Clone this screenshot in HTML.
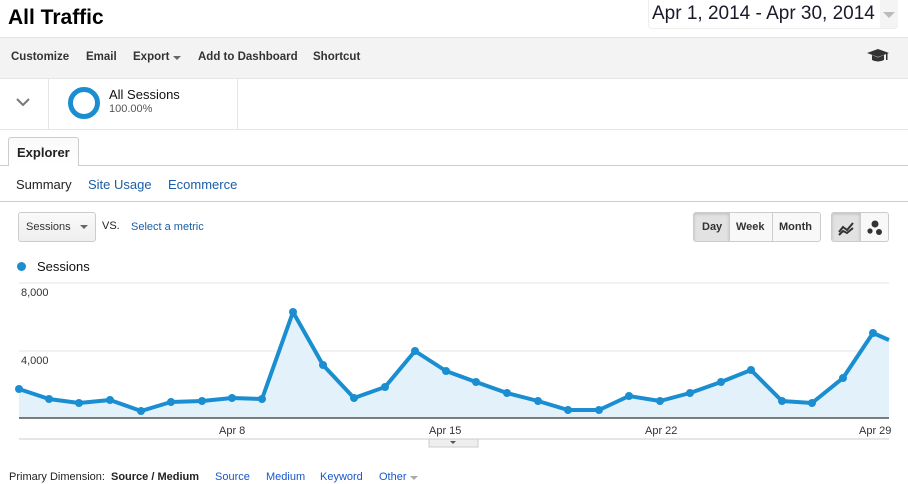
<!DOCTYPE html>
<html><head><meta charset="utf-8"><style>
*{margin:0;padding:0;box-sizing:border-box}
body{width:908px;height:484px;overflow:hidden;background:#fff;font-family:"Liberation Sans",Arial,sans-serif;position:relative;color:#222}
.a{position:absolute;white-space:nowrap}
.link{color:#1a5ea8}
</style></head><body>
<div class="a" style="left:8px;top:6px;font-size:21px;font-weight:bold;color:#000">All Traffic</div>
<div class="a" style="left:648px;top:0;width:250px;height:29px;border:1px solid #eee;border-top:none;border-radius:0 0 4px 4px"></div>
<div class="a" style="left:652px;top:3px;font-size:19px;color:#1a1a2a">Apr 1, 2014 - Apr 30, 2014</div>
<div class="a" style="left:880px;top:0;width:18px;height:28px;background:#f4f4f4"></div>
<div class="a" style="left:883px;top:12px;border-left:6px solid transparent;border-right:6px solid transparent;border-top:6px solid #bbb"></div>

<div class="a" style="left:0;top:37px;width:908px;height:42px;background:#f3f3f3;border-top:1px solid #e2e2e2;border-bottom:1px solid #e6e6e6"></div>
<div class="a" style="left:11px;top:51px;font-size:11.5px;font-weight:bold;color:#333;word-spacing:0">Customize</div>
<div class="a" style="left:86px;top:51px;font-size:11.5px;font-weight:bold;color:#333">Email</div>
<div class="a" style="left:133px;top:51px;font-size:11.5px;font-weight:bold;color:#333">Export</div>
<div class="a" style="left:173px;top:56px;border-left:4px solid transparent;border-right:4px solid transparent;border-top:4px solid #666"></div>
<div class="a" style="left:198px;top:51px;font-size:11.5px;font-weight:bold;color:#333">Add to Dashboard</div>
<div class="a" style="left:313px;top:51px;font-size:11.5px;font-weight:bold;color:#333">Shortcut</div>
<svg class="a" style="left:866px;top:48px" width="24" height="16" viewBox="0 0 24 16"><path d="M1 5 L12 1 L23 5 L12 9 Z" fill="#333"/><path d="M6 7 L6 12 Q12 15 18 12 L18 7 L12 9.5 Z" fill="#333"/><rect x="20" y="5" width="1.5" height="7" fill="#333"/></svg>

<div class="a" style="left:48px;top:79px;width:1px;height:50px;background:#e6e6e6"></div>
<div class="a" style="left:237px;top:79px;width:1px;height:50px;background:#e6e6e6"></div>
<div class="a" style="left:0;top:129px;width:908px;height:1px;background:#e6e6e6"></div>
<svg class="a" style="left:16px;top:98px" width="14" height="9"><path d="M1 1 L7 7 L13 1" stroke="#777" stroke-width="2" fill="none"/></svg>
<div class="a" style="left:68px;top:87px;width:32px;height:32px;border:5px solid #1a8ed1;border-radius:50%"></div>
<div class="a" style="left:109px;top:87px;font-size:13px;color:#111">All Sessions</div>
<div class="a" style="left:109px;top:103px;font-size:11px;color:#555">100.00%</div>

<div class="a" style="left:0;top:165px;width:908px;height:1px;background:#ccc"></div>
<div class="a" style="left:8px;top:137px;width:71px;height:29px;border:1px solid #ccc;border-bottom:none;background:linear-gradient(#fafafa,#fff);border-radius:3px 3px 0 0"></div>
<div class="a" style="left:17px;top:145px;font-size:13px;font-weight:bold;color:#222">Explorer</div>
<div class="a" style="left:16px;top:177px;font-size:13px;color:#222">Summary</div>
<div class="a link" style="left:88px;top:177px;font-size:13px">Site Usage</div>
<div class="a link" style="left:168px;top:177px;font-size:13px">Ecommerce</div>
<div class="a" style="left:0;top:201px;width:908px;height:1px;background:#ccc"></div>

<div class="a" style="left:18px;top:212px;width:78px;height:30px;border:1px solid #ccc;border-radius:3px;background:linear-gradient(#fafafa,#eee)"></div>
<div class="a" style="left:26px;top:221px;font-size:11px;color:#333">Sessions</div>
<div class="a" style="left:80px;top:225px;border-left:4px solid transparent;border-right:4px solid transparent;border-top:4px solid #666"></div>
<div class="a" style="left:102px;top:220px;font-size:11px;color:#222">VS.</div>
<div class="a link" style="left:131px;top:221px;font-size:11px">Select a metric</div>

<div class="a" style="left:693px;top:212px;width:128px;height:30px;border:1px solid #ccc;border-radius:3px;background:#f8f8f8;overflow:hidden">
<div style="position:absolute;left:0;top:0;width:35px;height:30px;background:#e2e2e2;box-shadow:inset 0 1px 3px #bbb"></div>
<div style="position:absolute;left:35px;top:0;width:1px;height:30px;background:#ccc"></div>
<div style="position:absolute;left:78px;top:0;width:1px;height:30px;background:#ccc"></div>
<div style="position:absolute;left:8px;top:8px;font-size:11px;font-weight:bold;color:#333">Day</div>
<div style="position:absolute;left:42px;top:8px;font-size:11px;font-weight:bold;color:#333">Week</div>
<div style="position:absolute;left:85px;top:8px;font-size:11px;font-weight:bold;color:#333">Month</div>
</div>
<div class="a" style="left:831px;top:212px;width:58px;height:30px;border:1px solid #ccc;border-radius:3px;background:#f8f8f8;overflow:hidden">
<div style="position:absolute;left:0;top:0;width:28px;height:30px;background:#e2e2e2;box-shadow:inset 0 1px 3px #bbb"></div>
<div style="position:absolute;left:28px;top:0;width:1px;height:30px;background:#ccc"></div>
<svg style="position:absolute;left:6px;top:7px" width="16" height="16"><path d="M1 12 L5 7 L9 10 L15 3" stroke="#333" stroke-width="2" fill="none"/><path d="M1 15 L5 11 L9 13 L15 8" stroke="#333" stroke-width="2" fill="none"/></svg>
<svg style="position:absolute;left:32px;top:6px" width="22" height="18"><circle cx="11" cy="5" r="3.5" fill="#333"/><circle cx="6" cy="12" r="2.6" fill="#333"/><circle cx="15" cy="13" r="3" fill="#333"/></svg>
</div>

<div class="a" style="left:17px;top:262px;width:9px;height:9px;border-radius:50%;background:#1a8ed1"></div>
<div class="a" style="left:37px;top:259px;font-size:13px;color:#111">Sessions</div>

<svg class="a" style="left:0;top:280px" width="908" height="170">
<line x1="19" y1="3" x2="889" y2="3" stroke="#e6e6e6"/>
<line x1="19" y1="71" x2="889" y2="71" stroke="#e6e6e6"/>
<text x="21" y="16" font-size="11" fill="#333" font-family="Liberation Sans">8,000</text>
<text x="21" y="84" font-size="11" fill="#333" font-family="Liberation Sans">4,000</text>
<path d="M19 109 L49 119 L79 123 L110 120 L141 131 L171 122 L202 121 L232 118 L262 119 L293 32 L323 85 L354 118 L385 107 L415 71 L446 91 L476 102 L507 113 L538 121 L568 130 L599 130 L629 116 L660 121 L690 113 L721 102 L751 90 L782 121 L812 123 L843 98 L873 53 L889 60 L889 138 L19 138 Z" fill="#e3f1fa"/>
<path d="M19 109 L49 119 L79 123 L110 120 L141 131 L171 122 L202 121 L232 118 L262 119 L293 32 L323 85 L354 118 L385 107 L415 71 L446 91 L476 102 L507 113 L538 121 L568 130 L599 130 L629 116 L660 121 L690 113 L721 102 L751 90 L782 121 L812 123 L843 98 L873 53 L889 60" stroke="#1a8ed1" stroke-width="4" fill="none" stroke-linejoin="round"/>
<g fill="#1a8ed1">
<circle cx="19" cy="109" r="4"/><circle cx="49" cy="119" r="4"/><circle cx="79" cy="123" r="4"/><circle cx="110" cy="120" r="4"/><circle cx="141" cy="131" r="4"/><circle cx="171" cy="122" r="4"/><circle cx="202" cy="121" r="4"/><circle cx="232" cy="118" r="4"/><circle cx="262" cy="119" r="4"/><circle cx="293" cy="32" r="4"/><circle cx="323" cy="85" r="4"/><circle cx="354" cy="118" r="4"/><circle cx="385" cy="107" r="4"/><circle cx="415" cy="71" r="4"/><circle cx="446" cy="91" r="4"/><circle cx="476" cy="102" r="4"/><circle cx="507" cy="113" r="4"/><circle cx="538" cy="121" r="4"/><circle cx="568" cy="130" r="4"/><circle cx="599" cy="130" r="4"/><circle cx="629" cy="116" r="4"/><circle cx="660" cy="121" r="4"/><circle cx="690" cy="113" r="4"/><circle cx="721" cy="102" r="4"/><circle cx="751" cy="90" r="4"/><circle cx="782" cy="121" r="4"/><circle cx="812" cy="123" r="4"/><circle cx="843" cy="98" r="4"/><circle cx="873" cy="53" r="4"/>
</g>
<line x1="19" y1="138" x2="889" y2="138" stroke="#333" stroke-width="1.2"/>
<text x="219" y="154" font-size="11" fill="#333" font-family="Liberation Sans">Apr 8</text>
<text x="429" y="154" font-size="11" fill="#333" font-family="Liberation Sans">Apr 15</text>
<text x="645" y="154" font-size="11" fill="#333" font-family="Liberation Sans">Apr 22</text>
<text x="859" y="154" font-size="11" fill="#333" font-family="Liberation Sans">Apr 29</text>
<line x1="19" y1="159" x2="889" y2="159" stroke="#ccc"/>
<rect x="429" y="159" width="49" height="8" fill="#eee" stroke="#ccc"/>
<path d="M450 161 L456 161 L453 164 Z" fill="#555"/>
</svg>

<div class="a" style="left:9px;top:471px;font-size:11px;color:#222">Primary Dimension:</div>
<div class="a" style="left:111px;top:471px;font-size:11px;font-weight:bold;color:#222">Source / Medium</div>
<div class="a link" style="left:215px;top:471px;font-size:11px;color:#1a56c8">Source</div>
<div class="a link" style="left:266px;top:471px;font-size:11px;color:#1a56c8">Medium</div>
<div class="a link" style="left:320px;top:471px;font-size:11px;color:#1a56c8">Keyword</div>
<div class="a link" style="left:379px;top:471px;font-size:11px;color:#1a56c8">Other</div>
<div class="a" style="left:410px;top:476px;border-left:4px solid transparent;border-right:4px solid transparent;border-top:4px solid #aaa"></div>
</body></html>
